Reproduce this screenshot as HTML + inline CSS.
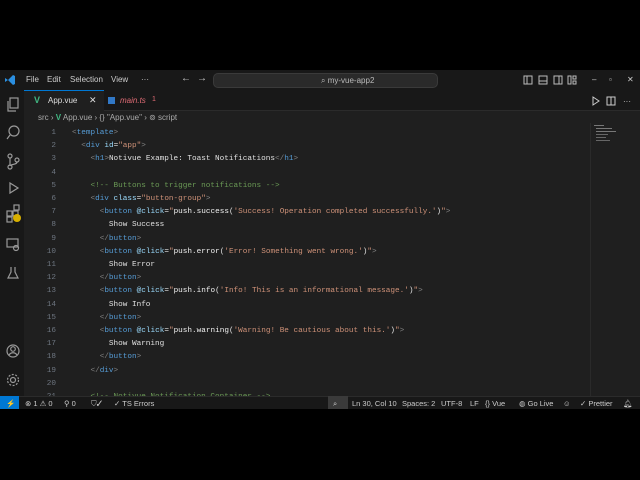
<!DOCTYPE html>
<html><head><meta charset="utf-8"><style>
*{margin:0;padding:0;box-sizing:border-box}
body{width:640px;height:480px;background:#000;position:relative;overflow:hidden;font-family:"Liberation Sans",sans-serif;color:#ccc}
.abs{position:absolute}
#title{left:0;top:70px;width:640px;height:20px;background:#181818}
#title .m{position:absolute;top:5px;font-size:8px;color:#ccc}
#search{left:213px;top:73px;width:225px;height:15px;background:#2a2a2a;border:1px solid #3a3a3a;border-radius:5px;font-size:8px;color:#bbb;padding:2px 0 0 107px}
#act{left:0;top:90px;width:24px;height:306px;background:#181818}
#tabs{left:24px;top:90px;width:616px;height:21px;background:#181818;border-bottom:1px solid #2b2b2b}
#tab1{left:24px;top:90px;width:80px;height:21px;background:#1f1f1f;border-top:1px solid #0078d4}
#editor{left:24px;top:111px;width:616px;height:285px;background:#1f1f1f;overflow:hidden}
#bc{left:38px;top:113px;font-size:8px;color:#aaa}
.code{position:absolute;left:0;top:16px;font-family:"Liberation Mono",monospace;font-size:7.7px;line-height:13.2px}
.ln{position:absolute;left:0;top:0;width:32px;text-align:right;color:#6e7681;white-space:pre}
.tx{position:absolute;left:48px;top:0;color:#e0e0e0;white-space:pre}
.g{color:#808080}.t{color:#569cd6}.a{color:#9cdcfe}.s{color:#ce9178}.c{color:#6a9955}.w{color:#f0f0f0}
#status{left:0;top:396px;width:640px;height:13px;background:#181818;border-top:1px solid #2b2b2b;font-size:7.5px;color:#ccc}
#status span{position:absolute;top:2px}
svg{position:absolute}
</style></head><body>
<div id="title" class="abs">
<svg style="left:4px;top:4px" width="12" height="12" viewBox="0 0 12 12"><path d="M9 1L4 6l5 5 2-1V2z M1 4l3 2-3 2z" fill="#2b8fe0"/></svg>
<span class="m" style="left:26px">File</span><span class="m" style="left:47px">Edit</span><span class="m" style="left:70px">Selection</span><span class="m" style="left:111px">View</span><span class="m" style="left:141px">···</span>
<span class="m" style="left:181px;font-size:10px;top:3px">←</span><span class="m" style="left:197px;font-size:10px;top:3px">→</span>
<svg style="left:523px;top:5px" width="60" height="10"><g fill="none" stroke="#bbb" stroke-width="1"><rect x="1" y="1" width="8" height="8"/><line x1="4" y1="1" x2="4" y2="9"/><rect x="16" y="1" width="8" height="8"/><line x1="16" y1="6" x2="24" y2="6"/><rect x="31" y="1" width="8" height="8"/><line x1="36" y1="1" x2="36" y2="9"/><rect x="45" y="1" width="3" height="8"/><rect x="50" y="1" width="3" height="3"/><rect x="50" y="6" width="3" height="3"/></g></svg>
<span class="m" style="left:592px">–</span><span class="m" style="left:609px">▫</span><span class="m" style="left:627px">✕</span>
</div>
<div id="search" class="abs">⌕ my-vue-app2</div>
<div id="act" class="abs">
<svg style="left:6px;top:7px" width="14" height="210" viewBox="0 0 14 210" fill="none" stroke="#999" stroke-width="1.2"><rect x="4" y="1" width="8" height="10"/><path d="M2 4v10h8"/>
<circle cx="8" cy="34" r="5"/><line x1="4" y1="38" x2="1" y2="42"/>
<circle cx="4" cy="59" r="2"/><circle cx="4" cy="70" r="2"/><circle cx="11" cy="63" r="2"/><path d="M4 61v7M11 65c0 3-7 2-7 4"/>
<path d="M4 86l8 5-8 5z"/>
<rect x="1" y="114" width="5" height="5"/><rect x="7" y="114" width="5" height="5"/><rect x="1" y="120" width="5" height="5"/><rect x="8" y="108" width="5" height="5"/>
<rect x="1" y="142" width="11" height="8"/><circle cx="10" cy="151" r="2.5"/>
<path d="M5 170v5l-3 6h10l-3-6v-5"/>
</svg>
<div class="abs" style="left:13px;top:124px;width:8px;height:8px;border-radius:4px;background:#d8b000"></div>
<svg style="left:6px;top:254px" width="14" height="44" viewBox="0 0 14 44" fill="none" stroke="#999" stroke-width="1.2"><circle cx="7" cy="7" r="6"/><circle cx="7" cy="5" r="2.3"/><path d="M3 11c2-3 6-3 8 0"/><circle cx="7" cy="36" r="2.5"/><circle cx="7" cy="36" r="5.5" stroke-dasharray="2 1.5"/></svg>
</div>
<div id="tabs" class="abs"></div>
<div id="tab1" class="abs"></div>
<span class="abs" style="left:34px;top:95px;font-size:9px;color:#41b883;font-weight:bold">V</span>
<span class="abs" style="left:48px;top:96px;font-size:8px;color:#ddd">App.vue</span>
<span class="abs" style="left:89px;top:95px;font-size:9px;color:#ddd">✕</span>
<div class="abs" style="left:108px;top:97px;width:7px;height:7px;background:#3178c6"></div>
<span class="abs" style="left:120px;top:96px;font-size:8px;color:#e06c75;font-style:italic">main.ts</span>
<span class="abs" style="left:152px;top:96px;font-size:7px;color:#e06c75">1</span>
<svg style="left:591px;top:96px" width="45" height="10" fill="none" stroke="#ccc"><path d="M2 1l6 4-6 4z"/><rect x="16" y="1" width="8" height="8"/><line x1="20" y1="1" x2="20" y2="9"/><text x="32" y="8" fill="#ccc" stroke="none" font-size="8">···</text></svg>
<div id="editor" class="abs">
<div class="abs" style="left:568px;top:12px;width:24px;height:24px">
<div class="abs" style="left:2px;top:2px;width:10px;height:1px;background:#777"></div><div class="abs" style="left:4px;top:5px;width:16px;height:1px;background:#777"></div><div class="abs" style="left:4px;top:8px;width:20px;height:1px;background:#777"></div><div class="abs" style="left:4px;top:11px;width:12px;height:1px;background:#666"></div><div class="abs" style="left:4px;top:14px;width:10px;height:1px;background:#666"></div><div class="abs" style="left:4px;top:17px;width:14px;height:1px;background:#666"></div></div>
<div class="abs" style="left:566px;top:12px;width:1px;height:273px;background:#2a2a2a"></div>
<div class="code"><div class="ln">1
2
3
4
5
6
7
8
9
10
11
12
13
14
15
16
17
18
19
20
21</div><div class="tx"><span class="g">&lt;</span><span class="t">template</span><span class="g">&gt;</span>
  <span class="g">&lt;</span><span class="t">div</span> <span class="a">id</span>=<span class="s">"app"</span><span class="g">&gt;</span>
    <span class="g">&lt;</span><span class="t">h1</span><span class="g">&gt;</span>Notivue Example: Toast Notifications<span class="g">&lt;/</span><span class="t">h1</span><span class="g">&gt;</span>

    <span class="c">&lt;!-- Buttons to trigger notifications --&gt;</span>
    <span class="g">&lt;</span><span class="t">div</span> <span class="a">class</span>=<span class="s">"button-group"</span><span class="g">&gt;</span>
      <span class="g">&lt;</span><span class="t">button</span> <span class="a">@click</span>=<span class="s">"</span><span class="w">push</span>.<span class="w">success</span>(<span class="s">'Success! Operation completed successfully.'</span>)<span class="s">"</span><span class="g">&gt;</span>
        Show Success
      <span class="g">&lt;/</span><span class="t">button</span><span class="g">&gt;</span>
      <span class="g">&lt;</span><span class="t">button</span> <span class="a">@click</span>=<span class="s">"</span><span class="w">push</span>.<span class="w">error</span>(<span class="s">'Error! Something went wrong.'</span>)<span class="s">"</span><span class="g">&gt;</span>
        Show Error
      <span class="g">&lt;/</span><span class="t">button</span><span class="g">&gt;</span>
      <span class="g">&lt;</span><span class="t">button</span> <span class="a">@click</span>=<span class="s">"</span><span class="w">push</span>.<span class="w">info</span>(<span class="s">'Info! This is an informational message.'</span>)<span class="s">"</span><span class="g">&gt;</span>
        Show Info
      <span class="g">&lt;/</span><span class="t">button</span><span class="g">&gt;</span>
      <span class="g">&lt;</span><span class="t">button</span> <span class="a">@click</span>=<span class="s">"</span><span class="w">push</span>.<span class="w">warning</span>(<span class="s">'Warning! Be cautious about this.'</span>)<span class="s">"</span><span class="g">&gt;</span>
        Show Warning
      <span class="g">&lt;/</span><span class="t">button</span><span class="g">&gt;</span>
    <span class="g">&lt;/</span><span class="t">div</span><span class="g">&gt;</span>

    <span class="c">&lt;!-- Notivue Notification Container --&gt;</span></div></div>
</div>
<div id="bc" class="abs">src › <b style="color:#41b883">V</b> App.vue › {} "App.vue" › ⊚ script</div>
<div id="status" class="abs">
<div class="abs" style="left:0;top:-1px;width:19px;height:13px;background:#0078d4"></div>
<span style="left:6px;color:#fff">⚡</span>
<span style="left:25px">⊗ 1 ⚠ 0</span><span style="left:64px">⚲ 0</span><span style="left:91px">⛉✓</span><span style="left:114px">✓ TS Errors</span>
<div class="abs" style="left:328px;top:-1px;width:20px;height:13px;background:#3a3a3a"></div>
<span style="left:333px">⌕</span>
<span style="left:352px">Ln 30, Col 10</span><span style="left:402px">Spaces: 2</span><span style="left:441px">UTF-8</span><span style="left:470px">LF</span><span style="left:485px">{} Vue</span><span style="left:519px">◍ Go Live</span><span style="left:563px">☺</span><span style="left:580px">✓ Prettier</span><span style="left:623px">🔔︎</span>
</div>
</body></html>
